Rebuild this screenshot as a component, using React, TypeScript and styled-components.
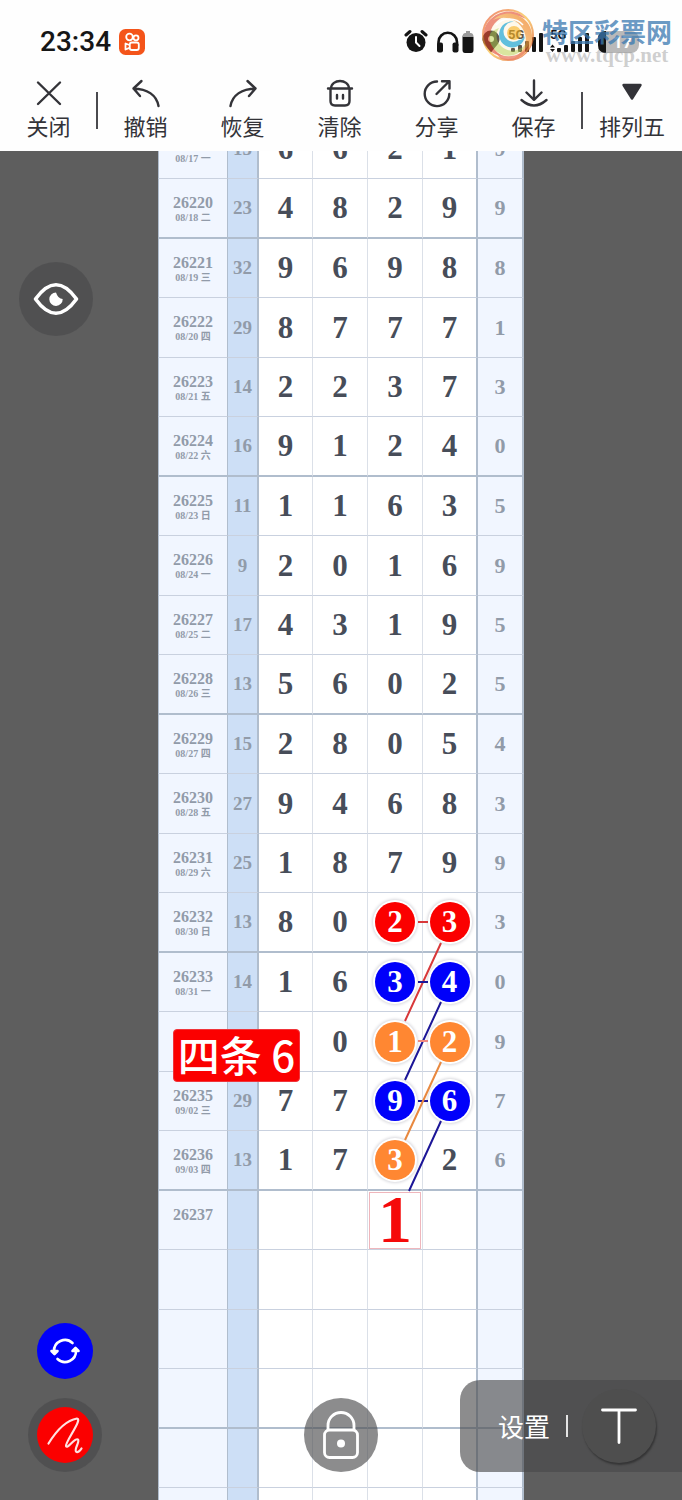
import React from 'react';
import styled, { createGlobalStyle, css } from 'styled-components';

const GlobalStyle = createGlobalStyle`
  *, *::before, *::after { box-sizing: border-box; }
  body { margin: 0; background: #5e5e5e; font-family: "Noto Sans CJK SC", sans-serif; }
  button { margin: 0; padding: 0; border: 0; background: none; font: inherit; color: inherit; cursor: pointer; }
`;

const serif = '"Liberation Serif", "Noto Sans CJK SC", serif';

const Screen = styled.div`
  display: flex;
  flex-direction: column;
  height: 100vh;
  overflow: hidden;
`;

const Header = styled.header`
  position: relative;
  flex: none;
  background: #fefefe;
  color: #333338;
`;

const StatusBar = styled.div`
  display: flex;
  align-items: center;
  justify-content: space-between;
  height: 76px;
  padding: 8px 42px 0 40px;
`;

const Clock = styled.div`
  display: flex;
  align-items: center;
  gap: 8px;
  color: #161616;
  font: 500 28px/32px Roboto, sans-serif;
`;

const Watermark = styled.div`
  position: absolute;
  top: 8px;
  right: 9px;
  display: flex;
  gap: 6px;
  pointer-events: none;
`;

const Brand = styled.div`
  display: flex;
  flex-direction: column;
  align-items: center;
  padding-top: 8px;
  width: 132px;
  white-space: nowrap;
`;

const BrandName = styled.span`
  color: rgba(58, 121, 177, 0.76);
  font-weight: 700;
  font-size: 26px;
  line-height: 30px;
`;

const BrandUrl = styled.span`
  color: rgba(160, 160, 160, 0.5);
  font: 700 21px/18px "Liberation Serif", serif;
`;

const Toolbar = styled.nav`
  display: flex;
  height: 75px;
`;

const ToolButton = styled.button<{ $wide?: boolean }>`
  flex: ${(p) => (p.$wide ? 100 : 97)} 1 0;
  display: flex;
  flex-direction: column;
  align-items: center;
  font-size: 22px;
  line-height: 32px;
  svg { display: block; margin-top: 1px; }
`;

const Divider = styled.span`
  width: 2px;
  height: 37px;
  margin: 16px -1px 0;
  background: #4a4a4e;
`;

const Board = styled.main`
  position: relative;
  flex: 1;
  min-height: 0;
  overflow: hidden;
  background: #5e5e5e;
`;

const Sheet = styled.div`
  position: relative;
  width: 366px;
  margin: -31px auto 0;
`;

const Grid = styled.table`
  width: 100%;
  table-layout: fixed;
  border-collapse: separate;
  border-spacing: 0;
  background: #fff;
  font-family: ${serif};
  font-weight: 700;
  text-align: center;
`;

const Row = styled.tr<{ $tall: boolean; $strong: boolean }>`
  height: ${(p) => (p.$tall ? 60 : 59)}px;
  > * {
    height: ${(p) => (p.$tall ? 60 : 59)}px;
    padding: 0;
    border-bottom: ${(p) => (p.$strong ? '2px solid #b0bdcd' : '1px solid #c9d1df')};
  }
  > th { padding-top: 2px; }
`;

const IssueCell = styled.th`
  background: #f1f6ff;
  border-left: 1px solid #b0bdcd;
  border-right: 1px solid #b0bdcd;
  color: #919ba9;
`;

const IssueNo = styled.div`
  font-size: 16px;
  line-height: 16px;
`;

const IssueDate = styled.div`
  height: 13px;
  font-size: 10px;
  line-height: 13px;
`;

const SumCell = styled.td`
  background: #cddff6;
  border-right: 2px solid #b0bdcd;
  color: #919ba9;
  font-size: 19px;
`;

const DigitCell = styled.td<{ $last?: boolean }>`
  border-right: ${(p) => (p.$last ? '2px solid #b0bdcd' : '1px solid #dbe0e8')};
  color: #474d59;
  font-size: 31px;
  line-height: 40px;
`;

const TailCell = styled.td`
  background: #f1f6ff;
  border-right: 2px solid #b0bdcd;
  color: #919ba9;
  font-size: 22px;
`;

const Ball = styled.span<{ $color: string }>`
  display: block;
  width: 40px;
  height: 40px;
  margin: 0 auto;
  border-radius: 50%;
  background: ${(p) => p.$color};
  box-shadow: 0 0 0 2px #fff, 0 0 3px 3px #d9d9de;
  color: #fff;
  font-size: 31px;
  line-height: 40px;
`;

const Guess = styled.span`
  display: block;
  height: 57px;
  margin: 0 1px;
  border: 1px solid #efb6bc;
  color: #f50a0a;
  font-size: 68px;
  line-height: 53px;
`;

const Links = styled.svg`
  position: absolute;
  left: 0;
  top: 0;
  pointer-events: none;
`;

const Note = styled.div`
  position: absolute;
  left: 15px;
  top: 909px;
  width: 127px;
  height: 53px;
  border: 1px solid #f0343a;
  border-radius: 4px;
  background: #fb0000;
  color: #fff;
  font-size: 42px;
  font-weight: 500;
  line-height: 48px;
  text-align: center;
  white-space: nowrap;
`;

const glass = css`
  background: rgba(73, 73, 75, 0.63);
`;

const RoundButton = styled.button`
  ${glass}
  display: flex;
  align-items: center;
  justify-content: center;
  width: 74px;
  height: 74px;
  border-radius: 50%;
`;

const EyeButton = styled(RoundButton)`
  position: absolute;
  left: 19px;
  top: 111px;
`;

const LockButton = styled(RoundButton)`
  position: absolute;
  left: 50%;
  bottom: 28px;
  margin-left: -37px;
`;

const Rail = styled.div`
  position: absolute;
  left: 28px;
  bottom: 28px;
  display: flex;
  flex-direction: column;
  align-items: center;
  gap: 19px;
`;

const Disc = styled.span<{ $color: string }>`
  display: flex;
  align-items: center;
  justify-content: center;
  width: 56px;
  height: 56px;
  border-radius: 50%;
  background: ${(p) => p.$color};
`;

const Settings = styled.div`
  ${glass}
  position: absolute;
  right: 0;
  bottom: 28px;
  display: flex;
  align-items: center;
  height: 92px;
  padding: 0 26px 0 38px;
  border-radius: 20px 0 0 20px;
  color: #fff;
  font-size: 26px;
  line-height: 36px;
`;

const Bar = styled.span`
  width: 2px;
  height: 22px;
  margin: 0 14px 0 16px;
  background: #e4e4e4;
`;

const TextTool = styled.button`
  display: flex;
  align-items: center;
  justify-content: center;
  width: 74px;
  height: 74px;
  border-radius: 50%;
  background: #4e4e4e;
  box-shadow: 1px 2px 2px rgba(0, 0, 0, 0.35);
`;

type Tool = { label: string; icon: React.ReactNode; wide?: boolean; dividerAfter?: boolean };

const Stroke = ({ children }: { children: React.ReactNode }) => (
  <svg width="32" height="32" viewBox="0 0 32 32" fill="none" stroke="#333338" strokeWidth="2.4" strokeLinecap="round" strokeLinejoin="round">
    {children}
  </svg>
);

const tools: Tool[] = [
  { label: '关闭', icon: <Stroke><path d="M5 5.500 27 27M27 5.500 5 27" /></Stroke>, dividerAfter: true },
  { label: '撤销', icon: <Stroke><path d="M11.500 4 3.500 11.500 10 19M3.500 11.500C17 12 26.500 18 28.500 29" /></Stroke> },
  { label: '恢复', icon: <Stroke><path d="M20.500 4 28.500 11.500 22 19M28.500 11.500C15 12 5.500 18 3.500 29" /></Stroke> },
  { label: '清除', icon: <Stroke><path d="M4 11.500H28M7 11.500C7.500 1.500 24.500 1.500 25 11.500M6.500 11.500V24Q6.500 28.500 11 28.500H21Q25.500 28.500 25.500 24V11.500M13 18V21.500M19 18V21.500" /></Stroke> },
  { label: '分享', icon: <Stroke><path d="M16 4.500A12.300 12.300 0 1 0 28.300 17M15.500 17 28 4.500M21 4.200H28.500V11.500" /></Stroke> },
  { label: '保存', icon: <Stroke><path d="M16 3.500V22.500M8.500 15.500 16 22.800 23.500 15.500M3.500 23Q16 34 28.500 23" /></Stroke>, dividerAfter: true },
  { label: '排列五', wide: true, icon: <Stroke><path d="M7.500 8H24.500L16 21.500Z" fill="#333338" /></Stroke> },
];

const RED = '#fb0000';
const BLUE = '#0000fa';
const ORANGE = '#ff8732';

type Draw = { no: string; date?: string; sum?: string; digits: string; tail?: string; balls?: Record<number, string>; guess?: boolean };

const draws: Draw[] = [
  { no: '26219', date: '08/17 一', sum: '15', digits: '6621', tail: '9' },
  { no: '26220', date: '08/18 二', sum: '23', digits: '4829', tail: '9' },
  { no: '26221', date: '08/19 三', sum: '32', digits: '9698', tail: '8' },
  { no: '26222', date: '08/20 四', sum: '29', digits: '8777', tail: '1' },
  { no: '26223', date: '08/21 五', sum: '14', digits: '2237', tail: '3' },
  { no: '26224', date: '08/22 六', sum: '16', digits: '9124', tail: '0' },
  { no: '26225', date: '08/23 日', sum: '11', digits: '1163', tail: '5' },
  { no: '26226', date: '08/24 一', sum: '9', digits: '2016', tail: '9' },
  { no: '26227', date: '08/25 二', sum: '17', digits: '4319', tail: '5' },
  { no: '26228', date: '08/26 三', sum: '13', digits: '5602', tail: '5' },
  { no: '26229', date: '08/27 四', sum: '15', digits: '2805', tail: '4' },
  { no: '26230', date: '08/28 五', sum: '27', digits: '9468', tail: '3' },
  { no: '26231', date: '08/29 六', sum: '25', digits: '1879', tail: '9' },
  { no: '26232', date: '08/30 日', sum: '13', digits: '8023', tail: '3', balls: { 2: RED, 3: RED } },
  { no: '26233', date: '08/31 一', sum: '14', digits: '1634', tail: '0', balls: { 2: BLUE, 3: BLUE } },
  { no: '', digits: ' 012', tail: '9', balls: { 2: ORANGE, 3: ORANGE } },
  { no: '26235', date: '09/02 三', sum: '29', digits: '7796', tail: '7', balls: { 2: BLUE, 3: BLUE } },
  { no: '26236', date: '09/03 四', sum: '13', digits: '1732', tail: '6', balls: { 2: ORANGE } },
  { no: '26237', digits: '  1 ', guess: true },
  { no: '', digits: '    ' },
  { no: '', digits: '    ' },
  { no: '', digits: '    ' },
  { no: '', digits: '    ' },
  { no: '', digits: '    ' },
];

function DrawRow({ draw, index }: { draw: Draw; index: number }) {
  return (
    <Row $tall={index % 2 === 1} $strong={index % 4 === 1}>
      <IssueCell scope="row">
        <IssueNo>{draw.no}</IssueNo>
        <IssueDate>{draw.date}</IssueDate>
      </IssueCell>
      <SumCell>{draw.sum}</SumCell>
      {[0, 1, 2, 3].map((i) => {
        const digit = draw.digits[i].trim();
        const color = draw.balls?.[i];
        return (
          <DigitCell key={i} $last={i === 3}>
            {color ? <Ball $color={color}>{digit}</Ball> : draw.guess && digit ? <Guess>{digit}</Guess> : digit}
          </DigitCell>
        );
      })}
      <TailCell>{draw.tail}</TailCell>
    </Row>
  );
}

const AppBadge = () => (
  <svg width="26" height="26" viewBox="0 0 26 26" fill="none" stroke="#fff" strokeWidth="1.800">
    <rect width="26" height="26" rx="6.500" fill="#f4541a" stroke="none" />
    <circle cx="10.500" cy="8" r="3.300" />
    <circle cx="17" cy="8.800" r="2.500" />
    <rect x="10.800" y="13.500" width="9" height="7.500" rx="2" />
    <path d="M10.500 16 6.500 14.500V20.500L10.500 18.800" strokeLinejoin="round" />
  </svg>
);

const heights = [4, 7, 11, 15, 19];

const StatusIcons = () => (
  <svg width="236" height="30" viewBox="0 0 236 30" fill="#141414">
    <circle cx="12" cy="15.500" r="9.500" />
    <path d="M2 8 6 4.500M22 8 18 4.500" stroke="#141414" strokeWidth="3" strokeLinecap="round" />
    <path d="M12 10V15.500L15.500 19" stroke="#fff" strokeWidth="2" fill="none" strokeLinecap="round" />
    <path d="M34.500 19V15A9.200 9.200 0 0 1 53 15V19" fill="none" stroke="#141414" strokeWidth="2.600" />
    <rect x="33" y="15.500" width="6" height="10" rx="2" />
    <rect x="48.500" y="15.500" width="6" height="10" rx="2" />
    <path d="M60 8Q58.500 8 58.500 10V23Q58.500 26 61 26H67Q69.500 26 69.500 23V10Z" />
    <path d="M58.500 10Q58.500 6 61.500 6H62V4H66V6H66.500Q69.500 6 69.500 10Z" fill="#9b9b9b" />
    <path d="M87 25.500C82 19 78.500 16.500 78.500 12A8.500 8.500 0 0 1 95.500 12C95.500 16.500 92 19 87 25.500Z" />
    <circle cx="87" cy="12" r="3" fill="#fff" />
    {heights.map((h, i) => (
      <rect key={i} x={107 + i * 7} y={25 - h} width="4" height={h} rx="1" />
    ))}
    {heights.map((h, i) => (
      <rect key={i} x={153 + i * 7} y={25 - h} width="4" height={h} rx="1" />
    ))}
    <path d="M146 20.500 148.500 17.500 151 20.500ZM146 22 148.500 25 151 22Z" />
    <text x="104" y="12" fontFamily="Roboto, sans-serif" fontWeight="700" fontSize="13">5G</text>
    <text x="146" y="12" fontFamily="Roboto, sans-serif" fontWeight="700" fontSize="13">5G</text>
    <rect x="194" y="4" width="41" height="22" rx="8" fill="#b9b9b9" />
    <path d="M202 4V26Q194 26 194 18V12Q194 4 202 4Z" />
    <text x="209" y="21" fill="#fff" fontFamily="Roboto, sans-serif" fontWeight="700" fontSize="17">17</text>
  </svg>
);

const BrandLogo = () => (
  <svg width="54" height="54" viewBox="0 0 54 54" fill="none" opacity="0.7">
    <defs>
      <linearGradient id="rim" x1="0" y1="0" x2="1" y2="1">
        <stop offset="0" stopColor="#ea5038" />
        <stop offset="0.500" stopColor="#f9bf3d" />
        <stop offset="1" stopColor="#dc4028" />
      </linearGradient>
      <linearGradient id="warm" x1="1" y1="0" x2="0" y2="1">
        <stop offset="0" stopColor="#ee7a20" />
        <stop offset="1" stopColor="#fbdf75" />
      </linearGradient>
    </defs>
    <circle cx="27" cy="27" r="25" fill="#ffedc4" fillOpacity="0.450" stroke="url(#rim)" strokeWidth="2" />
    <path d="M3 30C0 8 30-6 45 11C30 3 12 9 9 26C8 36 14 44 22 48C11 47 4 40 3 30Z" fill="#e2482c" fillOpacity="0.850" />
    <path d="M12 12C26-2 50 8 51 27C52 40 43 50 32 51C42 44 47 36 44 26C40 12 25 6 12 12Z" fill="url(#warm)" />
    <path d="M9 34C16 52 38 52 45 36C38 44 27 45 20 38C15 33 14 26 18 20C9 23 7 28 9 34Z" fill="#bfd45c" fillOpacity="0.800" />
    <path d="M13 43C25 53 42 48 48 36C45 49 31 56 19 50Z" fill="#e2482c" fillOpacity="0.750" />
    <path d="M44 28A13 13 0 1 1 40 17A10 10 0 1 0 38 32Q42 32 44 28Z" fill="#1fa5d0" />
    <circle cx="33" cy="25" r="7" fill="#f9b935" />
    <path d="M15 17C22 9 35 9 42 17" stroke="#fff" strokeWidth="1.500" />
  </svg>
);

export default function App() {
  return (
    <Screen>
      <GlobalStyle />
      <Header>
        <StatusBar>
          <Clock>23:34<AppBadge /></Clock>
          <StatusIcons />
        </StatusBar>
        <Toolbar>
          {tools.map((tool) => (
            <React.Fragment key={tool.label}>
              <ToolButton type="button" $wide={tool.wide}>
                {tool.icon}
                {tool.label}
              </ToolButton>
              {tool.dividerAfter && <Divider />}
            </React.Fragment>
          ))}
        </Toolbar>
        <Watermark>
          <BrandLogo />
          <Brand>
            <BrandName>特区彩票网</BrandName>
            <BrandUrl>www.tqcp.net</BrandUrl>
          </Brand>
        </Watermark>
      </Header>
      <Board>
        <Sheet>
          <Grid>
            <colgroup>
              <col width="70" />
              <col width="31" />
              <col width="54" />
              <col width="55" />
              <col width="55" />
              <col width="55" />
              <col width="46" />
            </colgroup>
            <tbody>
              {draws.map((draw, i) => (
                <DrawRow key={i} draw={draw} index={i} />
              ))}
            </tbody>
          </Grid>
          <Links width="366" height="1100" viewBox="0 0 366 1100" strokeWidth="2" fill="none">
            <path d="M260 802H270M283 823 247 901" stroke="#d8383a" />
            <path d="M260 862H270M283 882 247 960M260 981H270M283 1001 251 1071" stroke="#1c1698" />
            <path d="M260 921H270" stroke="#f08a80" />
            <path d="M283 942 247 1020" stroke="#e8883f" />
          </Links>
          <Note>四条 6</Note>
        </Sheet>
        <EyeButton type="button" aria-label="显示">
          <svg width="46" height="34" viewBox="0 0 46 34" fill="none">
            <path d="M2.500 17Q23-11.500 43.500 17Q23 45.500 2.500 17Z" stroke="#fff" strokeWidth="3.600" strokeLinejoin="round" />
            <path d="M23 10.500A6.700 6.700 0 1 0 29.700 17Q25 17 23 10.500Z" fill="#fff" />
          </svg>
        </EyeButton>
        <Rail>
          <button type="button" aria-label="切换">
            <Disc $color={BLUE}>
              <svg width="32" height="32" viewBox="0 0 32 32" fill="none" stroke="#fff" strokeWidth="2.600" strokeLinecap="round">
                <path d="M5 16.500A11 11 0 0 1 23.500 8M27 15.500A11 11 0 0 1 8.500 24" />
                <path d="M2.500 16H8.500L5.500 19ZM23.500 16H29.500L26.500 13Z" fill="#fff" strokeLinejoin="round" />
              </svg>
            </Disc>
          </button>
          <RoundButton type="button" aria-label="画笔">
            <Disc $color={RED}>
              <svg width="38" height="38" viewBox="0 0 38 38" fill="none" stroke="#ffe1e1" strokeWidth="2.200" strokeLinecap="round" strokeLinejoin="round">
                <path d="M2.500 27.500C9 17 19 4.500 31 2.500C37 3 19 26 20 30C21 34 29 21 32 23.500C34 26 28 33 30 35.500C31.500 37 34 35 35.500 32.500" />
              </svg>
            </Disc>
          </RoundButton>
        </Rail>
        <LockButton type="button" aria-label="锁定">
          <svg width="36" height="48" viewBox="0 0 36 48" fill="none" stroke="#fff" strokeWidth="2.800">
            <path d="M5 19V14.500A13 13 0 0 1 31 14.500V19" />
            <rect x="1.500" y="19" width="33" height="27.500" rx="5" />
            <circle cx="18" cy="32.500" r="4" fill="#fff" stroke="none" />
          </svg>
        </LockButton>
        <Settings>
          <button type="button">设置</button>
          <Bar />
          <TextTool type="button" aria-label="文字">
            <svg width="36" height="36" viewBox="0 0 36 36" stroke="#fff" strokeWidth="2.800" strokeLinecap="round">
              <path d="M1.500 2H34.500M18 2V34.500" />
            </svg>
          </TextTool>
        </Settings>
      </Board>
    </Screen>
  );
}
